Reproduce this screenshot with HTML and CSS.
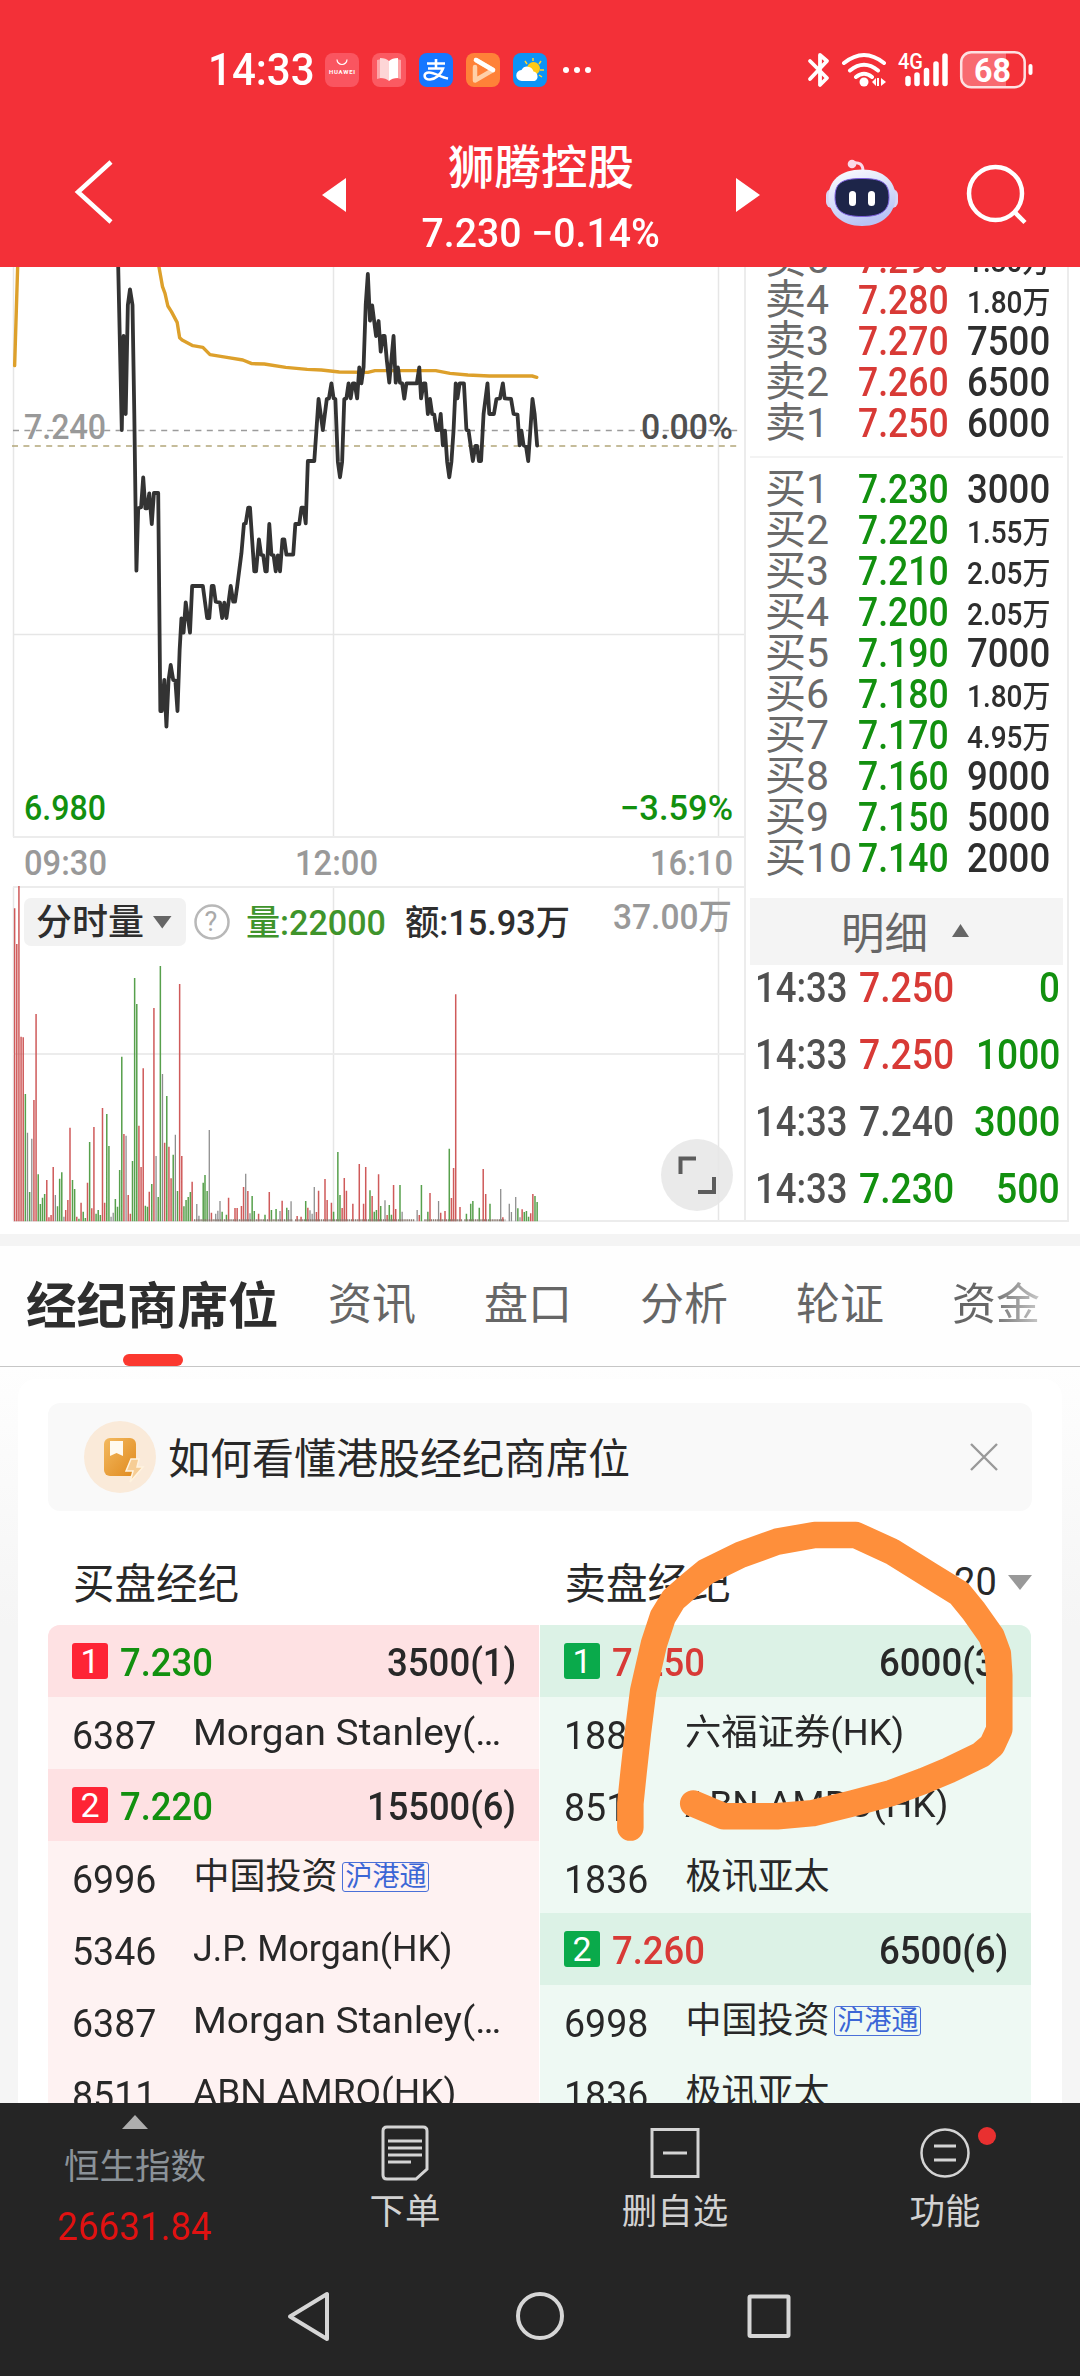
FILE: index.html
```html
<!DOCTYPE html>
<html lang="zh-CN">
<head>
<meta charset="utf-8">
<title>狮腾控股</title>
<link rel="stylesheet" href="styles.css">
</head>
<body>
<div class="screen">
  <header class="top">
    <div class="status">
      <span class="clock" data-w="107">14:33</span>
      <div class="apps">
        <svg width="34" height="34" viewBox="0 0 34 34"><rect width="34" height="34" rx="8" fill="#fa5560"/><path d="M12 6.500a5 5 0 0 0 10 0" fill="none" stroke="#fff" stroke-width="1.200"/><text x="4" y="21" font-size="6" font-weight="700" fill="#fff" textLength="26">HUAWEI</text></svg>
        <svg width="34" height="34" viewBox="0 0 34 34"><rect width="34" height="34" rx="8" fill="#fb5a62"/><path d="M5 7l4-1v19l-4 1zM29 7l-4-1v19l4 1z" fill="#fda5a8"/><path d="M8 5q6 0 9 3v20q-3-3-9-3z" fill="#fdd5d6"/><path d="M26 5q-6 0-9 3v20q3-3 9-3z" fill="#fff"/></svg>
        <svg width="34" height="34" viewBox="0 0 34 34"><rect width="34" height="34" rx="8" fill="#1677ff"/><path d="M8 10.500h18M17 6v9M9 15.500h15c-2 6-8 11-13 11-7 0-7-7-1-7 6 0 12 5 19 6" fill="none" stroke="#fff" stroke-width="2.600"/></svg>
        <svg width="34" height="34" viewBox="0 0 34 34"><rect width="34" height="34" rx="8" fill="#ff8138"/><path d="M9 14v13.500L27 17 10 7" fill="none" stroke="#ffd0a8" stroke-width="4.500" stroke-linejoin="round" stroke-linecap="round"/><path d="M10 7l17 10" stroke="#fff" stroke-width="4.500" stroke-linecap="round"/></svg>
        <svg width="34" height="34" viewBox="0 0 34 34"><rect width="34" height="34" rx="8" fill="#0b93f5"/><path d="M20 5v3M12 8l2 3M28 8l-2 3M27 17h4M26 22l3 2" stroke="#ffd52e" stroke-width="1.500"/><circle cx="20.500" cy="15.500" r="6.500" fill="#ffc914"/><path d="M9 28a5.500 5.500 0 0 1-.5-11 6.500 6.500 0 0 1 12 1.500 5 5 0 0 1 1 9.500z" fill="#fff"/></svg>
      </div>
      <svg class="dots" width="30" height="8" viewBox="0 0 30 8"><g fill="#fff"><circle cx="4" cy="4" r="3"/><circle cx="15" cy="4" r="3"/><circle cx="26" cy="4" r="3"/></g></svg>
      <svg class="signals" width="230" height="40" viewBox="806 49 230 40">
        <g fill="none" stroke="#fff" stroke-width="4" stroke-linecap="round" stroke-linejoin="round">
          <path d="M810 60l17 17-7 7V54l7 6-17 18" stroke-width="3.800"/>
          <path d="M844 62q20-16 40 0M850 69.500q14-11.500 28 0M856 76q8-6.500 16 0"/>
        </g>
        <circle cx="864" cy="81" r="4.500" fill="#fff"/>
        <path d="M872 81l4-4v8zM877 77h2v8h-2zM881 77l5 4-5 4z" fill="#fff"/>
        <text x="898" y="68" font-size="22" font-weight="500" fill="#fff" textLength="25" lengthAdjust="spacingAndGlyphs">4G</text>
        <path d="M908 77.500v5M917 74v8.500M926.500 69.500v13M936 63v19.500M945 55v27.500" stroke="#fff" stroke-width="5.500" stroke-linecap="round"/>
        <path d="M971 52h35v34h-35a9 9 0 0 1-9-9V61a9 9 0 0 1 9-9z" fill="#f86a70"/>
        <rect x="961.200" y="51.200" width="63.500" height="35" rx="10" fill="none" stroke="#fde1e2" stroke-width="2.500"/>
        <rect x="1028.500" y="63" width="4" height="11" rx="2" fill="#fff"/>
        <text x="974" y="81" font-size="34" font-weight="700" fill="#fff" textLength="37" lengthAdjust="spacingAndGlyphs">68</text>
      </svg>
    </div>
    <div class="titlebar">
      <svg class="back" width="48" height="72" viewBox="0 0 48 72"><path d="M40 6L7 36l33 30" fill="none" stroke="#fff" stroke-width="4.500"/></svg>
      <svg class="prev" width="24" height="34" viewBox="0 0 24 34"><path d="M24 0v34L0 17z" fill="#fff"/></svg>
      <div class="name"><h1>狮腾控股</h1><span data-w="238">7.230 −0.14%</span></div>
      <svg class="next" width="24" height="34" viewBox="0 0 24 34"><path d="M0 0v34l24-17z" fill="#fff"/></svg>
      <svg class="robot" width="74" height="70" viewBox="824 157 74 70">
        <defs><linearGradient id="head" x1="0" y1="0" x2=".4" y2="1"><stop offset="0" stop-color="#fff"/><stop offset="1" stop-color="#b9c4f5"/></linearGradient></defs>
        <path d="M851 162q11-2 11 8" fill="none" stroke="#fbd9ea" stroke-width="3"/><circle cx="851" cy="163" r="4.300" fill="#fbd9ea"/>
        <rect x="825" y="188" width="12" height="19" rx="6" fill="#d9d5f3"/><rect x="885" y="188" width="12" height="19" rx="6" fill="#d9d5f3"/>
        <path d="M861 168.500c22 0 33.500 12 33.500 27.500S882 225 861 225s-33.500-13-33.500-29 11.500-27.500 33.500-27.500z" fill="url(#head)"/>
        <path d="M861 177.500c21 0 27 5 27 19s-9 19-27 19-27-5-27-19 6-19 27-19z" fill="#1d2549" stroke="#7d5fe0" stroke-width="1"/>
        <rect x="848" y="190" width="7" height="15" rx="3.500" fill="#fff"/><rect x="867" y="190" width="7" height="15" rx="3.500" fill="#fff"/>
      </svg>
      <svg class="search" width="64" height="64" viewBox="964 163 64 64"><circle cx="994.500" cy="193.500" r="26.500" fill="none" stroke="#fff" stroke-width="4.500"/><path d="M1013 211.500l11 11" stroke="#fff" stroke-width="4.500"/></svg>
    </div>
  </header>

  <section class="quote">
    <svg class="chart" width="744" height="956" viewBox="0 267 744 956">
      <g fill="none" stroke="#e6e6e6" stroke-width="1.500">
        <path d="M13.500 267V837M13.500 887V1221M333.500 267V837M333.500 887V1221M718.500 267V837M718.500 887V1221M13 634.500H744"/>
        <path d="M13 837H744M13 887H744M13 1054H744M13 1221H744" stroke="#ececec" stroke-width="2"/>
      </g>
      <g fill="none" stroke-width="1.600" stroke-dasharray="6 5.400"><path d="M13 430.500H740" stroke="#9b9b9b"/><path d="M12 446H740" stroke="#b3a779"/></g>
      <g transform="translate(0 740) scale(.35714 .33333)" fill="none" stroke-width="4.200">
        <path stroke="#8d8d8d" stroke-width="3.600" d="M77 1444V1178M89 1444V1196M155 1444V1365M179 1444V1430M311 1444V1430M317 1444V1418M353 1444V1187M437 1444V1248M455 1444V1002M491 1444V1184M551 1444V1392M557 1444V1427M586 1444V1170M604 1444V1421M610 1444V1412M616 1444V1383M688 1444V1301M700 1444V1420M784 1444V1413M808 1444V1410M815 1444V1384M868 1444V1411M874 1444V1421M880 1444V1341M1078 1444V1381M1126 1444V1415M1168 1444V1410M1228 1444V1383M1402 1444V1347M1426 1444V1391M1432 1444V1416M1444 1444V1371M1456 1444V1432"/>
        <path stroke="#cf5a5a" d="M41 1444V505M47 1444V612M53 1444V438M59 1444V890M65 1444V892M95 1444V1080M101 1444V822M131 1444V1320M137 1444V1432M143 1444V1425M149 1444V1281M184 1444V1410M190 1444V1380M196 1444V1163M215 1444V1430M227 1444V1388M245 1444V1328M257 1444V1405M263 1444V1161M287 1444V1104M293 1444V1388M347 1444V1182M359 1444V1365M365 1444V1421M389 1444V1157M395 1444V1281M401 1444V985M418 1444V1355M431 1444V804M461 1444V1208M473 1444V1220M479 1444V1315M503 1444V732M509 1444V1248M538 1444V1325M592 1444V1418M640 1444V1373M658 1444V1404M664 1444V1404M676 1444V1398M682 1444V1341M694 1444V1353M724 1444V1421M754 1444V1356M790 1444V1382M832 1444V1428M843 1444V1430M862 1444V1403M886 1444V1416M892 1444V1352M910 1444V1317M916 1444V1380M928 1444V1388M958 1444V1404M964 1444V1314M970 1444V1352M988 1444V1391M1006 1444V1272M1018 1444V1391M1024 1444V1281M1042 1444V1368M1060 1444V1303M1084 1444V1425M1102 1444V1335M1108 1444V1407M1174 1444V1425M1204 1444V1359M1234 1444V1418M1246 1444V1413M1264 1444V1374M1270 1444V1284M1276 1444V763M1288 1444V1401M1353 1444V1287M1360 1444V1362M1408 1444V1432M1462 1444V1408M1486 1444V1420M1492 1444V1362"/>
        <path stroke="#57a04c" d="M71 1444V1062M83 1444V1356M107 1444V1303M113 1444V1392M119 1444V1373M125 1444V1362M161 1444V1399M167 1444V1316M173 1444V1297M203 1444V1320M209 1444V1347M221 1444V1436M233 1444V1415M239 1444V1434M251 1444V1206M269 1444V1421M275 1444V1410M281 1444V1425M299 1444V1122M305 1444V1218M323 1444V1377M329 1444V1400M335 1444V1290M341 1444V950M371 1444V1263M377 1444V714M383 1444V792M407 1444V1397M413 1444V1400M425 1444V1332M443 1444V1371M449 1444V678M467 1444V1068M485 1444V1244M497 1444V1353M515 1444V1399M521 1444V1380M527 1444V1371M533 1444V1356M569 1444V1328M574 1444V1305M580 1444V1353M622 1444V1415M634 1444V1424M706 1444V1368M712 1444V1413M742 1444V1424M760 1444V1410M773 1444V1407M803 1444V1403M856 1444V1383M934 1444V1415M946 1444V1236M952 1444V1365M1036 1444V1351M1048 1444V1415M1054 1444V1410M1066 1444V1398M1090 1444V1395M1096 1444V1424M1120 1444V1335M1180 1444V1335M1198 1444V1415M1258 1444V1226M1306 1444V1421M1318 1444V1391M1324 1444V1383M1342 1444V1403M1372 1444V1391M1450 1444V1405M1468 1444V1416M1474 1444V1413M1480 1444V1430M1498 1444V1368M1504 1444V1386"/>
        <path stroke="#8a7a70" stroke-width="6" stroke-dasharray="4 2" d="M543 1441H820M826 1441H1160M1188 1441H1294M1300 1441H1415"/>
      </g>
      <g transform="translate(0 260) scale(.35714 .33333)" fill="none" stroke-linejoin="round" stroke-linecap="round">
        <path vector-effect="non-scaling-stroke" stroke="#dda02b" stroke-width="3.400" d="M41 317L50 0M443 0L445 20L455 80L462 100L470 138L480 155L496 187L503 233L510 240L540 257L568 262L588 284L635 292L680 300L705 311L740 312L800 322L860 328L900 330L950 336L1030 337L1050 332L1220 332L1260 340L1310 345L1370 348L1490 348L1503 352"/>
        <path vector-effect="non-scaling-stroke" stroke="#333" stroke-width="3.800" d="M330 0L331 20L341 510L346 228L352 462L358 135L364 88L371 135L376 460L382 932L387 745L395 742L401 652L407 745L412 745L418 700L425 792L431 699L443 699L449 1353L453 1353L460 1260L466 1400L472 1260L478 1215L485 1260L491 1262L497 1353L503 1170L508 1075L514 1118L520 1027L532 1118L538 978L568 978L580 1074L586 1074L593 978L598 978L604 1025L616 1028L622 1074L628 1028L634 1074L646 978L653 1025L658 1025L664 980L676 880L683 792L688 790L695 743L700 743L706 840L712 934L717 934L725 838L731 884L737 886L743 934L747 934L754 792L760 884L766 886L772 934L778 886L784 934L791 838L796 838L802 884L821 884L827 792L838 792L844 743L850 743L856 790L862 603L880 603L886 510L892 417L904 510L915 417L921 415L928 370L934 415L939 417L946 605L952 652L958 605L964 417L970 415L976 370L982 415L988 370L993 370L1000 415L1006 322L1012 370L1018 322L1024 135L1030 42L1036 182L1042 136L1053 228L1060 183L1066 275L1072 228L1077 228L1083 300L1090 368L1102 228L1108 368L1114 322L1120 368L1126 370L1132 416L1138 370L1167 370L1174 322L1179 415L1186 370L1191 370L1198 462L1204 417L1210 462L1216 464L1222 510L1228 510L1234 462L1240 556L1246 512L1252 605L1258 652L1264 605L1270 510L1276 370L1281 415L1287 370L1299 370L1306 510L1312 512L1318 558L1324 603L1331 558L1336 558L1341 603L1347 603L1354 462L1365 370L1370 462L1383 462L1390 417L1400 415L1408 370L1413 415L1431 417L1438 462L1449 464L1455 556L1460 512L1466 556L1473 560L1479 603L1491 417L1497 462L1504 557"/>
      </g>
      <g class="axis">
        <text x="24" y="438.500" textLength="82" lengthAdjust="spacingAndGlyphs">7.240</text>
        <text x="641" y="438.500" textLength="92" lengthAdjust="spacingAndGlyphs" class="ink">0.00%</text>
        <text x="24" y="820" textLength="82" lengthAdjust="spacingAndGlyphs" class="down">6.980</text>
        <text x="620" y="820" textLength="113" lengthAdjust="spacingAndGlyphs" class="down">−3.59%</text>
        <text x="24" y="875" textLength="83" lengthAdjust="spacingAndGlyphs">09:30</text>
        <text x="295" y="875" textLength="83" lengthAdjust="spacingAndGlyphs">12:00</text>
        <text x="650" y="875" textLength="83" lengthAdjust="spacingAndGlyphs">16:10</text>
        <text x="613" y="929" textLength="119" lengthAdjust="spacingAndGlyphs">37.00万</text>
        <rect x="24" y="898" width="162" height="48" rx="7" fill="#f2f2f2"/>
        <text x="36" y="935" textLength="108" font-size="36" class="dark">分时量</text>
        <path d="M153 916h18.500l-9.250 12.500z" fill="#666"/>
        <circle cx="212" cy="922" r="16.500" fill="none" stroke="#b8b8b8" stroke-width="2.500"/>
        <text x="204.500" y="931" font-size="27" fill="#aaa" font-weight="400">?</text>
        <text x="246" y="935" textLength="140" lengthAdjust="spacingAndGlyphs" fill="#3f942c" font-weight="500">量:22000</text>
        <text x="405" y="935" textLength="165" lengthAdjust="spacingAndGlyphs" class="dark">额:15.93万</text>
      </g>
      <circle cx="697" cy="1175" r="36" fill="#e6e6e6" fill-opacity=".85"/>
      <path d="M696 1158.500H680.500V1174M714 1177V1192H698" fill="none" stroke="#5c5c5c" stroke-width="4"/>
    </svg>

    <div class="book">
      <div class="asks">
        <div class="lv"><span class="tag">卖5</span><b class="up" data-w="91">7.290</b><i class="wan" data-w="83">1.30万</i></div>
        <div class="lv"><span class="tag">卖4</span><b class="up" data-w="91">7.280</b><i class="wan" data-w="83">1.80万</i></div>
        <div class="lv"><span class="tag">卖3</span><b class="up" data-w="91">7.270</b><i data-w="83">7500</i></div>
        <div class="lv"><span class="tag">卖2</span><b class="up" data-w="91">7.260</b><i data-w="83">6500</i></div>
        <div class="lv"><span class="tag">卖1</span><b class="up" data-w="91">7.250</b><i data-w="83">6000</i></div>
      </div>
      <div class="bids">
        <div class="lv"><span class="tag">买1</span><b class="dn" data-w="91">7.230</b><i data-w="83">3000</i></div>
        <div class="lv"><span class="tag">买2</span><b class="dn" data-w="91">7.220</b><i class="wan" data-w="83">1.55万</i></div>
        <div class="lv"><span class="tag">买3</span><b class="dn" data-w="91">7.210</b><i class="wan" data-w="83">2.05万</i></div>
        <div class="lv"><span class="tag">买4</span><b class="dn" data-w="91">7.200</b><i class="wan" data-w="83">2.05万</i></div>
        <div class="lv"><span class="tag">买5</span><b class="dn" data-w="91">7.190</b><i data-w="83">7000</i></div>
        <div class="lv"><span class="tag">买6</span><b class="dn" data-w="91">7.180</b><i class="wan" data-w="83">1.80万</i></div>
        <div class="lv"><span class="tag">买7</span><b class="dn" data-w="91">7.170</b><i class="wan" data-w="83">4.95万</i></div>
        <div class="lv"><span class="tag">买8</span><b class="dn" data-w="91">7.160</b><i data-w="83">9000</i></div>
        <div class="lv"><span class="tag">买9</span><b class="dn" data-w="91">7.150</b><i data-w="83">5000</i></div>
        <div class="lv"><span class="tag">买10</span><b class="dn" data-w="91">7.140</b><i data-w="83">2000</i></div>
      </div>
      <div class="detail"><span>明细</span><svg width="17" height="13" viewBox="0 0 17 13"><path d="M8.500 0L17 13H0z" fill="#666"/></svg></div>
      <div class="ticks">
        <div class="tk"><span data-w="93">14:33</span><b class="up" data-w="95">7.250</b><b class="dn q" data-w="21">0</b></div>
        <div class="tk"><span data-w="93">14:33</span><b class="up" data-w="95">7.250</b><b class="dn q" data-w="84">1000</b></div>
        <div class="tk"><span data-w="93">14:33</span><b data-w="95">7.240</b><b class="dn q" data-w="86">3000</b></div>
        <div class="tk"><span data-w="93">14:33</span><b class="dn" data-w="95">7.230</b><b class="dn q" data-w="64">500</b></div>
      </div>
    </div>
  </section>

  <nav class="tabs">
    <a class="on">经纪商席位</a><a>资讯</a><a>盘口</a><a>分析</a><a>轮证</a><a class="fade">资金</a>
  </nav>

  <main class="seats">
    <div class="card">
      <div class="notice">
        <svg width="72" height="72" viewBox="0 0 72 72">
          <defs><linearGradient id="bk" x1="0" y1="0" x2="1" y2="1"><stop offset="0" stop-color="#f3b95f"/><stop offset="1" stop-color="#e08a1e"/></linearGradient></defs>
          <circle cx="36" cy="36" r="36" fill="#faead9"/><rect x="20" y="17" width="32" height="38" rx="6" fill="url(#bk)"/><path d="M26 20h13v15l-6.500-3-6.500 3z" fill="#fffaf0"/><path d="M47 38h8l-2 8h6L46 61l3-11h-7z" fill="#f6cd95" stroke="#fff3df" stroke-width="1.500"/>
        </svg>
        <span>如何看懂港股经纪商席位</span>
        <svg class="close" width="28" height="28" viewBox="0 0 28 28"><path d="M1 1l26 26M27 1L1 27" stroke="#999" stroke-width="2.400"/></svg>
      </div>
      <div class="heads"><span>买盘经纪</span><span>卖盘经纪</span><em>20</em><svg width="24" height="15" viewBox="0 0 24 15"><path d="M0 0h24L12 15z" fill="#999"/></svg></div>
      <div class="table">
        <div class="side buy">
          <div class="row lead"><u>1</u><b class="dn" data-w="93">7.230</b><i data-w="129">3500(1)</i></div>
          <div class="row"><s data-w="84">6387</s><span data-w="308">Morgan Stanley(…</span></div>
          <div class="row lead"><u>2</u><b class="dn" data-w="93">7.220</b><i data-w="149">15500(6)</i></div>
          <div class="row"><s data-w="84">6996</s><span>中国投资</span><q>沪港通</q></div>
          <div class="row"><s data-w="84">5346</s><span data-w="259">J.P. Morgan(HK)</span></div>
          <div class="row"><s data-w="84">6387</s><span data-w="308">Morgan Stanley(…</span></div>
          <div class="row"><s data-w="84">8511</s><span data-w="264">ABN AMRO(HK)</span></div>
        </div>
        <div class="side sell">
          <div class="row lead"><u>1</u><b class="up" data-w="93">7.250</b><i data-w="129">6000(3)</i></div>
          <div class="row"><s data-w="84">1888</s><span data-w="219">六福证券(HK)</span></div>
          <div class="row"><s data-w="84">8511</s><span data-w="264">ABN AMRO(HK)</span></div>
          <div class="row"><s data-w="84">1836</s><span>极讯亚太</span></div>
          <div class="row lead"><u>2</u><b class="up" data-w="93">7.260</b><i data-w="129">6500(6)</i></div>
          <div class="row"><s data-w="84">6998</s><span>中国投资</span><q>沪港通</q></div>
          <div class="row"><s data-w="84">1836</s><span>极讯亚太</span></div>
        </div>
      </div>
    </div>
    <svg class="marker" width="560" height="360" viewBox="520 1500 560 360">
      <path transform="translate(520 1500) scale(.35714 .38903)" vector-effect="non-scaling-stroke" fill="none" stroke="#fe8f3b" stroke-width="26.500" stroke-linecap="round" stroke-linejoin="round" d="M309 842L309 780L318 700L330 600L345 490L360 430L375 370L400 300L430 255L480 215L520 185L620 140L720 107L825 90L940 90L1040 132L1150 195L1230 240L1270 285L1320 350L1338 395L1342 450L1342 590L1322 630L1290 655L1200 695L1130 722L1040 753L930 780L820 805L720 813L570 813L485 780"/>
    </svg>
  </main>

  <footer class="bottom">
    <div class="actions">
      <a class="index"><svg width="26" height="14" viewBox="0 0 26 14"><path d="M13 0l13 14H0z" fill="#aeaeae"/></svg><span>恒生指数</span><strong data-w="155">26631.84</strong></a>
      <a><svg width="50" height="58" viewBox="0 0 50 58"><g fill="none" stroke="#d4d4d4" stroke-width="3"><path d="M7 3h36q4 0 4 4v38L36 55H7q-4 0-4-4V7q0-4 4-4z"/><path d="M8 17h34M8 24h34M8 31h34M8 38h23"/></g></svg><span>下单</span></a>
      <a><svg width="50" height="58" viewBox="0 0 50 58"><path d="M2 5.500h46v47H2zM13 29h24" fill="none" stroke="#d4d4d4" stroke-width="3"/></svg><span>删自选</span></a>
      <a class="func"><svg width="50" height="58" viewBox="0 0 50 58"><path d="M14 22h22M14 36h22" stroke="#d4d4d4" stroke-width="3"/><circle cx="25" cy="29" r="23.500" fill="none" stroke="#d4d4d4" stroke-width="2.500"/></svg><span>功能</span><em></em></a>
    </div>
    <svg class="keys" width="506" height="52" viewBox="286 2290 506 52"><g fill="none" stroke="#d6d6d6" stroke-width="4" stroke-linejoin="round"><path d="M327 2294v45L290 2316.500z"/><circle cx="540" cy="2316" r="22"/><rect x="749.500" y="2296.500" width="39" height="39.500" rx="1"/></g></svg>
  </footer>
</div>
<script src="script.js"></script>
</body>
</html>
```

FILE: styles.css
```css
* { box-sizing: border-box; margin: 0; padding: 0; }
body { background: #fff; font-family: Roboto, "Noto Sans CJK SC", sans-serif; color: #282828; }
svg { display: block; flex: none; }
b, i, u, s, em { font-style: normal; text-decoration: none; font-weight: 500; }
q { quotes: none; }
q::before, q::after { content: none; }
[data-w] { display: inline-block; flex: none; white-space: nowrap; transform-origin: 0 50%; }
.up { color: #d83a36; }
.dn { color: #12900f; }
.screen { width: 1080px; height: 2376px; overflow: hidden; display: flex; flex-direction: column; }

.top { height: 267px; flex: none; background: #f33038; color: #fff; }
.status { height: 138px; padding: 2px 44px 0 208px; display: flex; align-items: center; }
.clock { font-size: 44px; font-weight: 500; }
.apps { display: flex; gap: 13px; margin-left: 10px; }
.dots { margin-left: 15px; }
.signals { margin-left: auto; }
.titlebar { height: 129px; display: flex; align-items: center; padding: 0 52px 21px 71px; }
.prev { margin: 6px 0 0 203px; }
.name { flex: none; width: 390px; display: flex; flex-direction: column; align-items: center; padding-top: 15px; }
.name h1 { font-size: 46.500px; font-weight: 500; line-height: 56px; }
.name span { font-size: 40px; font-weight: 500; line-height: 50px; margin-top: 13px; }
.next { margin-top: 6px; }
.robot { margin: 1px 0 0 65px; }
.search { margin: 6px 0 0 66px; }

.quote { height: 956px; flex: none; display: flex; }
.axis { font-size: 35px; font-weight: 500; fill: #999; }
.axis .ink { fill: #505050; }
.axis .down { fill: #12900f; }
.axis .dark { fill: #2e2e2e; }
.book { width: 325px; border: solid #ececec; border-width: 0 2px 2px; overflow: hidden; padding: 0 4px; display: flex; flex-direction: column; height: 955px; }
.asks { margin-top: -28px; height: 219px; border-bottom: 2px solid #f3f3f3; flex: none; }
.bids { padding-top: 11px; flex: none; }
.lv { display: grid; grid-template-columns: 93px 91px 1fr; height: 41px; line-height: 41px; padding: 0 13px 0 15px; font-size: 41px; }
.lv b { justify-self: start; }
.lv i { justify-self: end; color: #2e2e2e; }
.lv .wan { font-size: 31px; line-height: 45px; }
.tag { color: #6a6a6a; font-weight: 400; white-space: nowrap; }
.detail { height: 67px; flex: none; margin-top: 19px; background: #f4f4f4; display: flex; align-items: center; gap: 24px; padding: 0 0 2px 91px; font-size: 43.500px; color: #666; }
.ticks { margin-top: -11px; }
.tk { display: flex; height: 67px; line-height: 67px; padding: 0 3px 0 5px; font-size: 42px; font-weight: 500; color: #505050; }
.tk span { margin-right: 11px; }
.tk .q { margin-left: auto; }

.tabs { flex: none; margin-top: 11px; height: 133px; border-top: 12px solid #f4f4f4; border-bottom: 1px solid #c6c6c6; display: flex; align-items: center; padding-left: 26px; font-size: 44px; line-height: 56px; color: #666; background: #fefefe; }
.tabs a { width: 156px; flex: none; padding-bottom: 3px; }
.tabs .on { width: 302px; height: 120px; line-height: 121px; padding: 0; font-size: 50.500px; font-weight: 700; color: #2e2e2e; display: flex; flex-direction: column; }
.tabs .on::after { content: ""; flex: none; width: 60px; height: 12px; margin: -13px 0 0 97px; border-radius: 6px; background: #fb382f; }
.tabs .fade { width: 90px; background: linear-gradient(90deg, #666 40%, #ccc); -webkit-background-clip: text; background-clip: text; color: transparent; }

.seats { height: 736px; flex: none; padding: 12px 18px 0; background: linear-gradient(#fefefe, #f5f5f5 260px); position: relative; overflow: hidden; }
.card { background: #fff; border-radius: 18px; padding: 24px 30px 0; height: 760px; }
.notice { height: 108px; border-radius: 12px; background: #f9f9f9; display: flex; align-items: center; padding: 0 34px 0 36px; font-size: 42px; }
.notice span { margin-left: 12px; padding-bottom: 3px; }
.close { margin-left: auto; }
.heads { height: 114px; padding: 28px 0 0 25px; display: flex; align-items: center; font-size: 41.500px; }
.heads span { width: 492px; padding-bottom: 3px; }
.heads span + span { width: 390px; }
.heads em { font-size: 38px; font-weight: 400; width: 54px; }
.table { display: grid; grid-template-columns: 491px 491px; gap: 1px; width: 983px; }
.side { overflow: hidden; }
.buy { background: #fef2f2; border-radius: 12px 0 0; }
.sell { background: #eef9f3; border-radius: 0 12px 0 0; }
.row { height: 72px; line-height: 72px; display: flex; align-items: center; padding: 0 23px 0 24px; font-size: 36px; }
.lead { font-size: 38px; }
.lead b, .lead i { padding-top: 4px; }
.buy .lead { background: #fee1e3; }
.sell .lead { background: #dcf2e6; }
.row u { width: 36px; height: 36px; line-height: 37px; border-radius: 3px; margin-right: 12px; font-size: 34px; font-weight: 400; text-align: center; color: #fff; }
.buy u { background: #fe2435; }
.sell u { background: #0aaa4b; }
.row i { margin-left: auto; }
.row s { font-size: 38px; font-weight: 400; padding-top: 5px; }
.row span { margin-left: 37px; }
.row q { margin: 0 0 0 5px; height: 30px; line-height: 28px; padding: 0 2px; border: 1.500px solid #4a70d8; border-radius: 3px; font-size: 27px; color: #3b66d6; }
.marker { position: absolute; left: 520px; top: 133px; }

.bottom { flex: 1; background: #252525; color: #d2d2d2; font-size: 35.500px; }
.actions { height: 187px; display: grid; grid-template-columns: repeat(4, 270px); }
.actions a { display: flex; flex-direction: column; align-items: center; padding-top: 21px; position: relative; }
.actions a span { line-height: 40px; margin-top: 10px; }
.actions .index { padding-top: 12px; }
.actions .index span { margin-top: 18px; color: #8b9298; }
.index strong { font-size: 38px; font-weight: 400; line-height: 44px; margin-top: 18px; color: #e01212; }
.func em { position: absolute; left: 168px; top: 24px; width: 18px; height: 18px; border-radius: 50%; background: #e93030; }
.keys { margin-left: 286px; }
```

FILE: script.js
```js
// Condense numerals and Latin names to their column width.
document.querySelectorAll('[data-w]').forEach(function (el) {
  var natural = el.offsetWidth;
  var target = parseFloat(el.dataset.w);
  var align = getComputedStyle(el).justifySelf;
  var centered = getComputedStyle(el.parentElement).flexDirection === 'column';
  if (align === 'end') {
    el.style.transformOrigin = '100% 50%';
  } else if (centered) {
    el.style.transformOrigin = '50% 50%';
  } else {
    el.style.marginRight = (parseFloat(getComputedStyle(el).marginRight) + target - natural) + 'px';
  }
  el.style.transform = 'scaleX(' + target / natural + ')';
});
```
